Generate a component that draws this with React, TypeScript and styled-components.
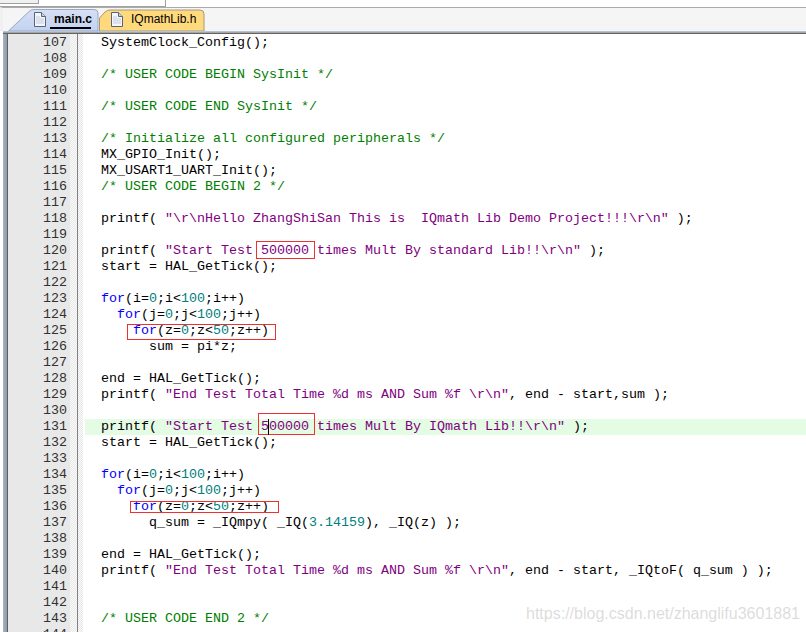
import styled, { createGlobalStyle } from 'styled-components';

const GlobalStyle = createGlobalStyle`
	html, body {
		margin: 0;
		padding: 0;
		width: 806px;
		height: 632px;
		overflow: hidden;
		background: #fff;
	}
`;

const LINES: string[] = [
	'  SystemClock_Config();',
	'',
	'  /* USER CODE BEGIN SysInit */',
	'',
	'  /* USER CODE END SysInit */',
	'',
	'  /* Initialize all configured peripherals */',
	'  MX_GPIO_Init();',
	'  MX_USART1_UART_Init();',
	'  /* USER CODE BEGIN 2 */',
	'',
	'  printf( "\\r\\nHello ZhangShiSan This is  IQmath Lib Demo Project!!!\\r\\n" );',
	'',
	'  printf( "Start Test 500000 times Mult By standard Lib!!\\r\\n" );',
	'  start = HAL_GetTick();',
	'',
	'  for(i=0;i<100;i++)',
	'    for(j=0;j<100;j++)',
	'      for(z=0;z<50;z++)',
	'        sum = pi*z;',
	'',
	'  end = HAL_GetTick();',
	'  printf( "End Test Total Time %d ms AND Sum %f \\r\\n", end - start,sum );',
	'',
	'  printf( "Start Test 500000 times Mult By IQmath Lib!!\\r\\n" );',
	'  start = HAL_GetTick();',
	'',
	'  for(i=0;i<100;i++)',
	'    for(j=0;j<100;j++)',
	'      for(z=0;z<50;z++)',
	'        q_sum = _IQmpy( _IQ(3.14159), _IQ(z) );',
	'',
	'  end = HAL_GetTick();',
	'  printf( "End Test Total Time %d ms AND Sum %f \\r\\n", end - start, _IQtoF( q_sum ) );',
	'',
	'',
	'  /* USER CODE END 2 */',
	'',
];

const FIRST_LINE = 107;
const ACTIVE_LINE = 131;

const TOKEN_COLORS: Record<string, string> = {
	comment: '#008000',
	string: '#800080',
	number: '#008080',
	keyword: '#0000ff',
	plain: '#000000',
};

const tokenize = (line: string) => {
	const re = /(\/\*.*?\*\/)|("(?:[^"])*")|(\bfor\b)|(\b\d+(?:\.\d+)?\b)/g;
	const out: { text: string; kind: string }[] = [];
	let last = 0;
	let m: RegExpExecArray | null;
	while ((m = re.exec(line))) {
		if (m.index > last) out.push({ text: line.slice(last, m.index), kind: 'plain' });
		const kind = m[1] ? 'comment' : m[2] ? 'string' : m[3] ? 'keyword' : 'number';
		out.push({ text: m[0], kind });
		last = m.index + m[0].length;
	}
	if (last < line.length) out.push({ text: line.slice(last), kind: 'plain' });
	return out;
};

const Window = styled.div`
	position: relative;
	width: 806px;
	height: 632px;
	overflow: hidden;
	display: flex;
	flex-direction: column;
	background: #fff;
`;

const TopStrip = styled.div`
	height: 7px;
	display: flex;
	flex: none;
`;

const ToolPanel = styled.div`
	width: 165px;
	height: 6px;
	border-right: 1px solid #a0a0a0;
	border-bottom: 1px solid #a0a0a0;
`;

const ToolButton = styled.div`
	width: 38px;
	height: 3px;
	border-right: 1px solid #a0a0a0;
	border-bottom: 1px solid #a0a0a0;
	background: #f0f0f0;
`;

const TabBar = styled.div`
	height: 23px;
	flex: none;
	display: flex;
	align-items: flex-end;
	padding-left: 5px;
	background: #f5f5f5;
	border-top: 1px solid #ababab;
	border-left: 3px solid #f0f0f0;
`;

const TabRule = styled.div`
	height: 3px;
	flex: none;
	background: linear-gradient(#b4c2da 0 1px, #a6a6a6 1px 2px, #636363 2px);
	margin-left: 3px;
`;

const Tab = styled.div<{ $width: number }>`
	position: relative;
	width: ${(p) => p.$width}px;
	height: 22px;
	flex: none;
`;

const TabShape = styled.svg`
	position: absolute;
	inset: 0;
`;

const FileIcon = styled.svg<{ $left: number }>`
	position: absolute;
	left: ${(p) => p.$left}px;
	top: 3px;
`;

const TabLabel = styled.span<{ $left: number; $active?: boolean }>`
	position: absolute;
	left: ${(p) => p.$left}px;
	top: 3px;
	font-family: 'Liberation Sans', Arial, sans-serif;
	font-size: 12px;
	line-height: 15px;
	color: #000;
	font-weight: ${(p) => (p.$active ? 700 : 400)};
	white-space: nowrap;
`;

const TabUnderline = styled.div`
	position: absolute;
	left: 42px;
	top: 18px;
	width: 41px;
	height: 2px;
	background: #000;
`;

const Editor = styled.div`
	position: relative;
	flex: 1;
	display: flex;
	min-height: 0;
	overflow: hidden;
	padding-left: 3px;
`;

const EdgeBand = styled.div`
	width: 4px;
	flex: none;
	background: linear-gradient(90deg, #a9b3c2, #8e99a9);
	border-right: 1px solid #5f5f5f;
`;

const Gutter = styled.div`
	width: 62px;
	flex: none;
	background: #e8e8e8;
	padding-top: 1px;
`;

const LineNumber = styled.div`
	height: 16px;
	line-height: 16px;
	padding-right: 3px;
	text-align: right;
	font-family: 'Liberation Mono', 'Courier New', monospace;
	font-size: 13.33px;
	color: #303030;
`;

const Dither = styled.div<{ $width: number }>`
	width: ${(p) => p.$width}px;
	flex: none;
	background: repeating-conic-gradient(#e8e8e8 0 25%, #fafafa 0 50%) 0 0 / 2px 2px;
`;

const GutterLine = styled.div`
	width: 1px;
	flex: none;
	background: #808080;
`;

const CodeArea = styled.div`
	flex: 1;
	min-width: 0;
	padding-top: 1px;
	padding-left: 2px;
`;

const CodeLine = styled.div<{ $active?: boolean }>`
	height: 16px;
	line-height: 16px;
	white-space: pre;
	font-family: 'Liberation Mono', 'Courier New', monospace;
	font-size: 13.33px;
	background: ${(p) => (p.$active ? '#e4fbe4' : 'transparent')};
`;

const Token = styled.span<{ $kind: string }>`
	color: ${(p) => TOKEN_COLORS[p.$kind]};
`;

const Mark = styled.div<{ $x: number; $y: number; $w: number; $h: number }>`
	position: absolute;
	left: ${(p) => p.$x}px;
	top: ${(p) => p.$y - 33}px;
	width: ${(p) => p.$w}px;
	height: ${(p) => p.$h}px;
	border: 1px solid #ee3030;
	pointer-events: none;
`;

const Caret = styled.div`
	position: absolute;
	left: 268px;
	top: ${418 - 33}px;
	width: 1px;
	height: 16px;
	background: #000;
`;

const Watermark = styled.div`
	position: absolute;
	right: 6px;
	bottom: 9px;
	font-family: 'Liberation Sans', Arial, sans-serif;
	font-size: 16px;
	line-height: 18px;
	color: rgba(170, 170, 170, 0.42);
	white-space: nowrap;
`;

const DocIcon = ({ left }: { left: number }) => (
	<FileIcon $left={left} width="13" height="15" viewBox="0 0 13 15">
		<path d="M1.5 .5H8.5L12.5 4.5V14.5H1.5Z" fill="#f4f6fb" stroke="#56647e" />
		<path d="M8.5 .5V4.5H12.5" fill="#c9d2e4" stroke="#56647e" />
		<path d="M3 5h4M3 7h8M3 9h8M3 11h8" stroke="#c4cbdb" />
	</FileIcon>
);

const App = () => {
	return (
		<Window>
			<GlobalStyle />
			<TopStrip>
				<ToolPanel>
					<ToolButton />
				</ToolPanel>
			</TopStrip>
			<TabBar>
				<Tab $width={88}>
					<TabShape width="92" height="22" viewBox="0 0 92 22">
						<defs>
							<linearGradient id="blueTab" x1="0" y1="0" x2="0" y2="1">
								<stop offset="0" stopColor="#d6e0f5" />
								<stop offset="1" stopColor="#c2d2f0" />
							</linearGradient>
						</defs>
						<path
							d="M.5 22L21 2.5Q23 .5 26 .5H86Q90 .5 90 4V22Z"
							fill="url(#blueTab)"
							stroke="#9aa8c0"
						/>
					</TabShape>
					<DocIcon left={25} />
					<TabLabel $left={46} $active>
						main.c
					</TabLabel>
					<TabUnderline />
				</Tab>
				<Tab $width={112}>
					<TabShape width="112" height="22" viewBox="0 0 112 22">
						<path
							d="M3.5 22V9L9 3Q11 1 14 1H104Q108 1 108 5V22Z"
							fill="#ffd97c"
							stroke="#a39a80"
						/>
					</TabShape>
					<DocIcon left={14} />
					<TabLabel $left={35}>IQmathLib.h</TabLabel>
				</Tab>
			</TabBar>
			<TabRule />
			<Editor>
				<EdgeBand />
				<Gutter>
					{LINES.map((_, i) => (
						<LineNumber key={i}>{FIRST_LINE + i}</LineNumber>
					))}
				</Gutter>
				<Dither $width={7} />
				<GutterLine />
				<Dither $width={5} />
				<CodeArea>
					{LINES.map((line, i) => (
						<CodeLine key={i} $active={FIRST_LINE + i === ACTIVE_LINE}>
							{tokenize(line).map((t, j) => (
								<Token key={j} $kind={t.kind}>
									{t.text}
								</Token>
							))}
						</CodeLine>
					))}
				</CodeArea>
				<Mark $x={256} $y={240} $w={57} $h={16} />
				<Mark $x={127} $y={323} $w={147} $h={14} />
				<Mark $x={258} $y={412} $w={55} $h={20} />
				<Mark $x={130} $y={500} $w={147} $h={10} />
				<Caret />
				<Watermark>https://blog.csdn.net/zhanglifu3601881</Watermark>
			</Editor>
		</Window>
	);
};

export default App;
